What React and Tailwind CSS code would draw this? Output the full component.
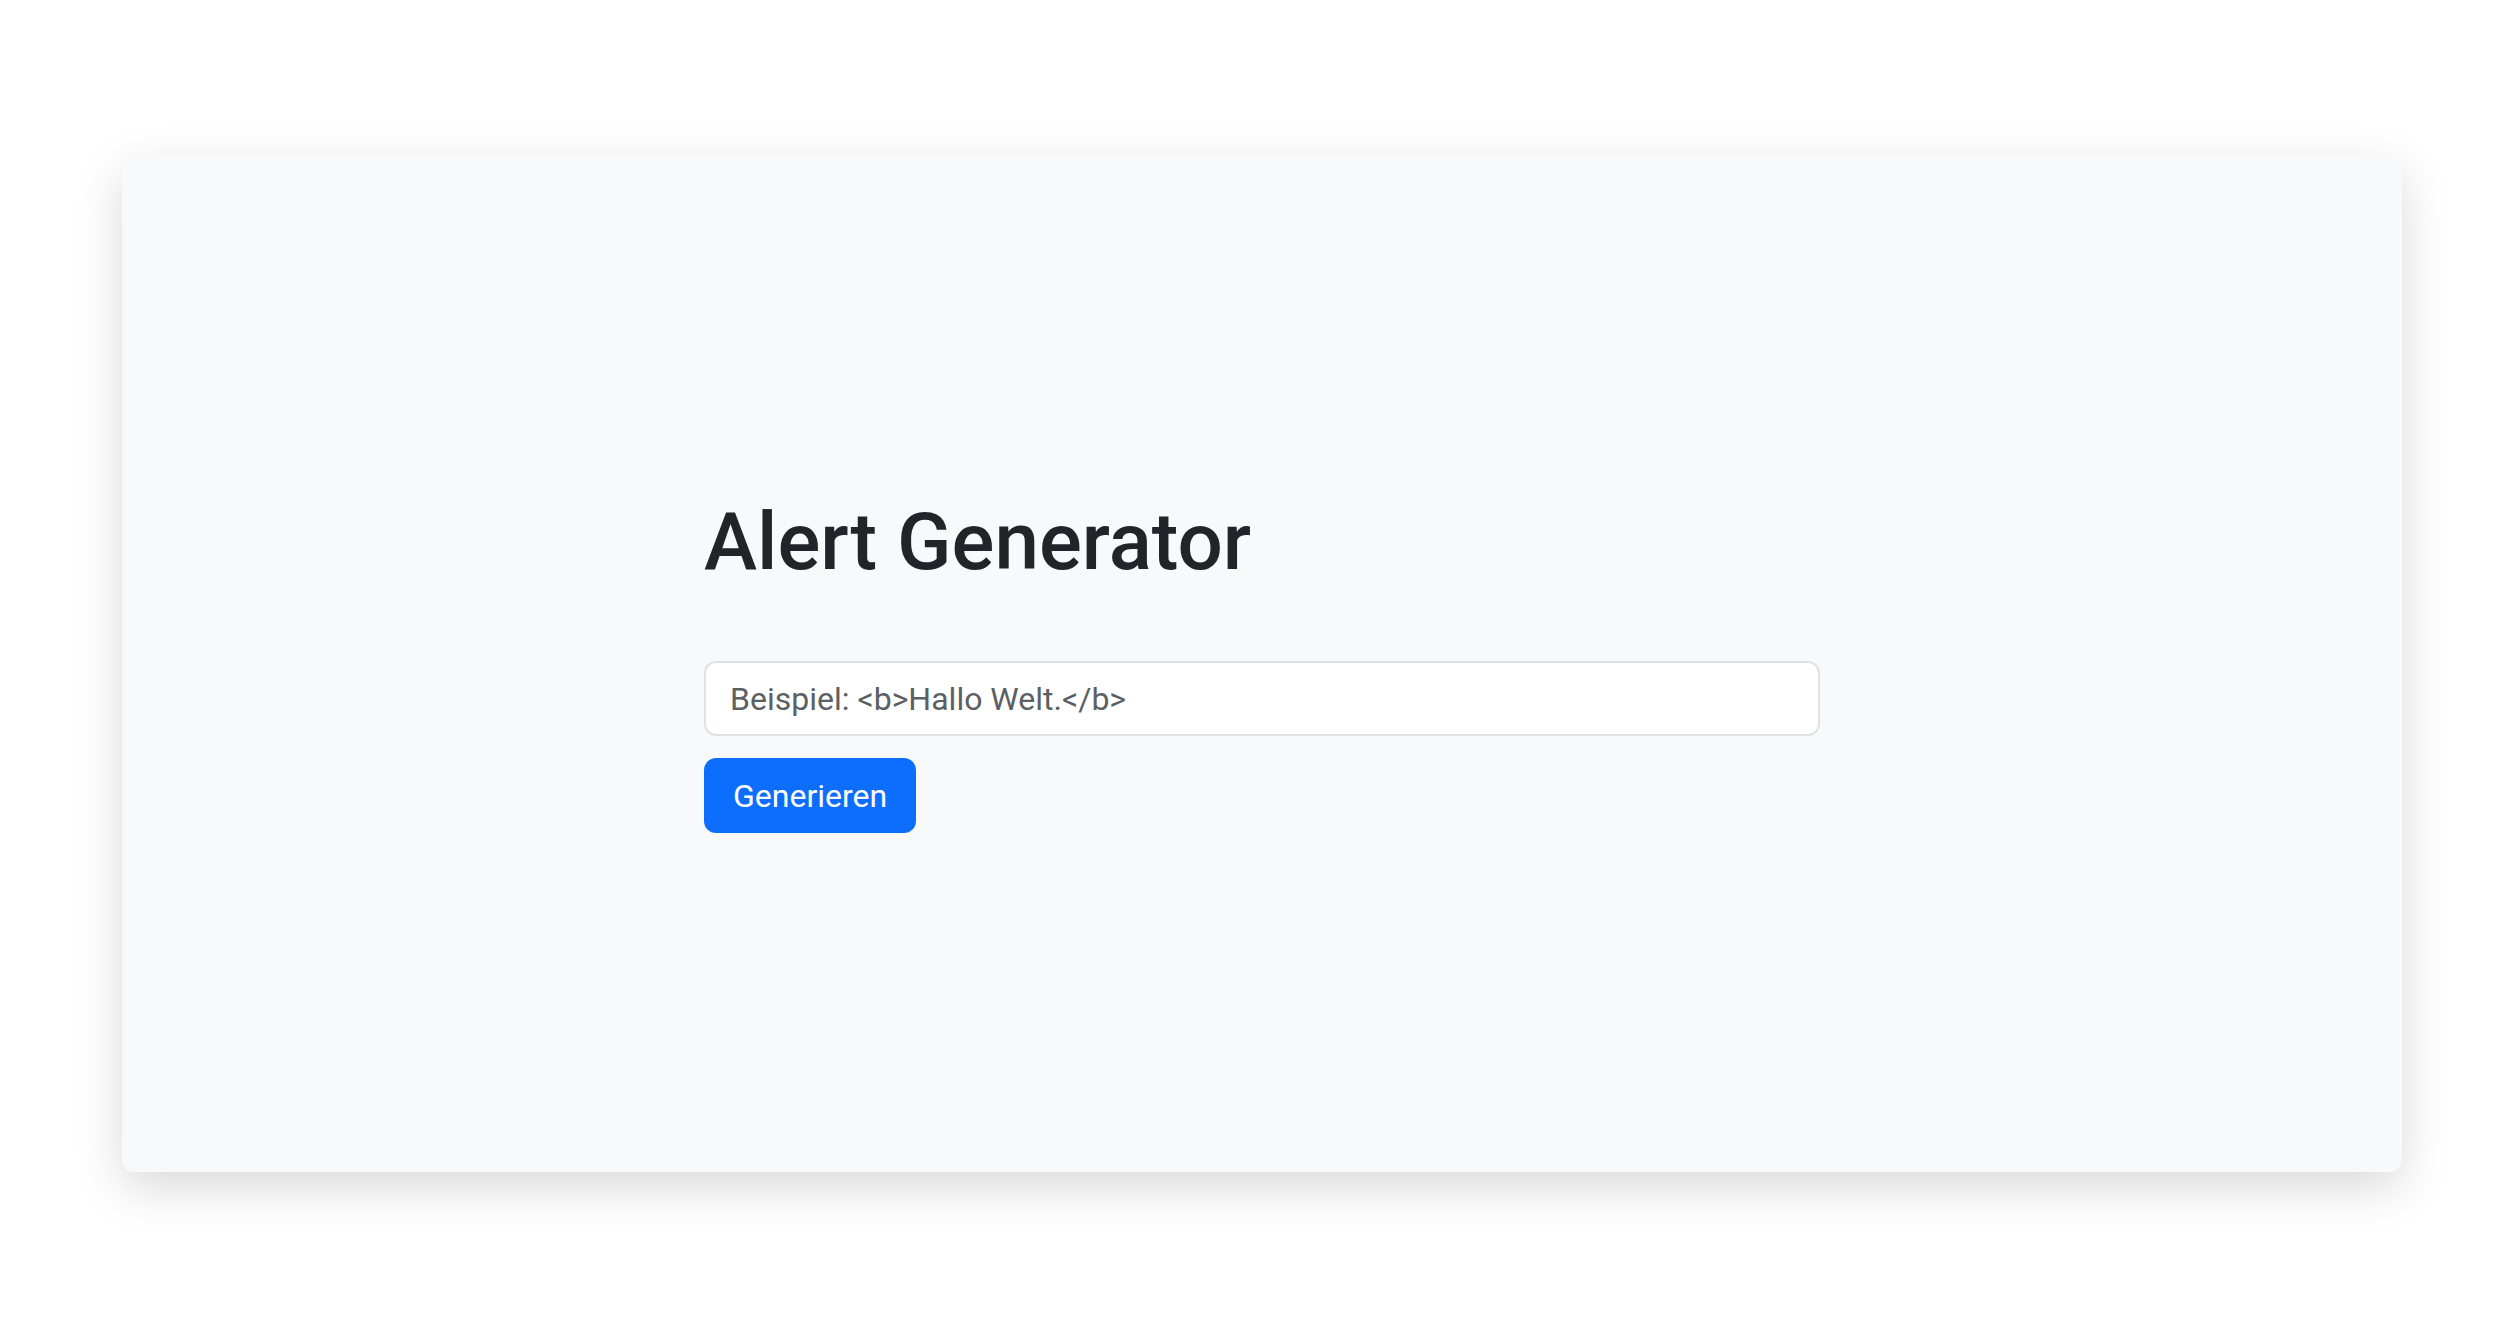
import React, { useState } from 'react';

export default function App() {
  const [text, setText] = useState('');

  return (
    <div className="min-h-screen bg-white pl-[122px] pr-[118px] py-[155px] font-['Roboto','Liberation_Sans',Arial,sans-serif]">
      <div className="flex h-[1017px] items-center justify-center rounded-[12px] bg-[#f8f9fa] shadow-[0_16px_48px_rgba(0,0,0,0.15)]">
        <div className="w-[1116px]">
          <h1 className="mb-[71px] text-[80px] font-medium leading-[96px] text-[#212529]">Alert Generator</h1>
          <input
            className="block h-[75px] w-full rounded-[12px] border-2 border-[#dee2e6] bg-white px-[24px] text-[32px] text-[#212529] outline-none placeholder:text-[#5c5f63]"
            value={text}
            onChange={e => setText(e.target.value)}
            placeholder="Beispiel: <b>Hallo Welt.</b>"
          />
          <button className="mt-[22px] h-[75px] rounded-[12px] bg-[#0d6efd] px-[29px] text-[32px] text-white">Generieren</button>
        </div>
      </div>
    </div>
  );
}
